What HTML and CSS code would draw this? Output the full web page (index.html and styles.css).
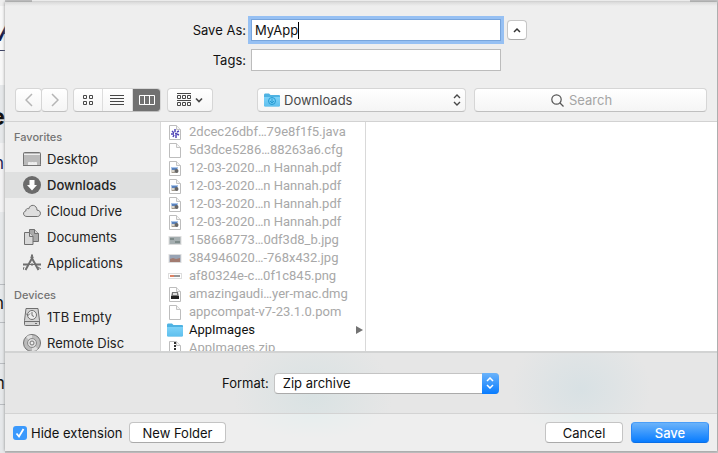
FILE: index.html
```html
<!DOCTYPE html>
<html lang="en">
<head>
<meta charset="utf-8">
<meta name="viewport" content="width=device-width, initial-scale=1">
<title>Save As</title>
<link rel="stylesheet" href="styles.css">
</head>
<body>
<svg width="0" height="0" class="defs" aria-hidden="true">
  <defs>
    <linearGradient id="folderFill" x1="0" y1="0" x2="0" y2="1"><stop offset="0" stop-color="#7dd2f8"/><stop offset="1" stop-color="#5fc0ee"/></linearGradient>
    <symbol id="page" viewBox="0 0 16 16"><path d="M2.5 1.5h7l4 4v10h-11z" fill="#fff" stroke="#bdbdbd"/><path d="M9.5 1.5v4h4" fill="#f4f4f4" stroke="#c4c4c4"/></symbol>
    <symbol id="pdf" viewBox="0 0 16 16"><use href="#page"/><path d="M4 7h7v3H4z" fill="#a9c4e8"/><path d="M4 10l3-2 4 1v4H4z" fill="#d8d4cc"/><path d="M5 8h5v2H5z" fill="#5b83bd"/><circle cx="9.500" cy="11" r="2" fill="#666"/><path d="M5 12h3v1H5z" fill="#a39a8d"/></symbol>
    <symbol id="folder" viewBox="0 0 16 14"><path d="M0 2q0-1.500 1-1.500h4l1.500 1.500H15q1 0 1 1v9.500q0 1-1 1H1q-1 0-1-1z" fill="#4eb2e2"/><path d="M0 4h16v8.500q0 .7-1 .7H1q-1 0-1-.7z" fill="url(#folderFill)"/></symbol>
  </defs>
</svg>
<div class="backdrop" aria-hidden="true">
  <span class="peek peek-title">A</span>
  <span class="peek peek-heading">e</span>
  <span class="peek peek-a">n</span>
  <span class="peek peek-b">n</span>
  <span class="peek peek-c">m</span>
</div>
<main class="dialog">
  <form>
    <section class="fields">
      <label for="name">Save As:</label>
      <div class="name-box"><input id="name" class="text name" type="text" value="MyApp"><span class="caret"></span></div>
      <button class="collapse" type="button" aria-label="Collapse"><svg width="8" height="6" viewBox="0 0 8 6"><path d="M1 5l3-3 3 3" fill="none" stroke="#333" stroke-width="1.500"/></svg></button>
      <label for="tags">Tags:</label>
      <input id="tags" class="text" type="text">
    </section>

    <section class="toolbar">
      <div class="history">
        <button class="tool" type="button" aria-label="Back"><svg width="8" height="14" viewBox="0 0 8 14"><path d="M7 1L1 7l6 6" fill="none" stroke="#b5b5b5" stroke-width="1.500"/></svg></button>
        <button class="tool" type="button" aria-label="Forward"><svg width="8" height="14" viewBox="0 0 8 14"><path d="M1 1l6 6-6 6" fill="none" stroke="#b5b5b5" stroke-width="1.500"/></svg></button>
      </div>
      <div class="views">
        <button type="button" aria-label="Icons"><svg width="12" height="12" viewBox="0 0 12 12" fill="none" stroke="#484848"><path d="M1.500 1.500h3v3h-3zM7.500 1.500h3v3h-3zM1.500 7.500h3v3h-3zM7.500 7.500h3v3h-3z"/></svg></button>
        <button type="button" aria-label="List"><svg width="14" height="12" viewBox="0 0 14 12"><path d="M0 1.500h14M0 4.500h14M0 7.500h14M0 10.500h14" stroke="#484848"/></svg></button>
        <button class="active" type="button" aria-label="Columns"><svg width="16" height="12" viewBox="0 0 16 12"><path d="M.5 1.500h15v9H.5zM5.500 1.500v9M10.500 1.500v9" fill="none" stroke="#fff"/></svg></button>
      </div>
      <button class="tool arrange" type="button" aria-label="Arrange"><svg width="26" height="14" viewBox="0 0 26 14" fill="none" stroke="#484848"><path d="M0 .5h14M0 7.500h14M.5 2.500h3v3h-3zM5.500 2.500h3v3h-3zM10.500 2.500h3v3h-3zM.5 9.500h3v3h-3zM5.500 9.500h3v3h-3zM10.500 9.500h3v3h-3z"/><path d="M19 5.500l3 3 3-3" stroke-width="1.700"/></svg></button>
      <div class="location">
        <svg class="location-icon" width="16" height="14"><use href="#folder"/><circle cx="8" cy="8" r="3.500" fill="none" stroke="#269bd2"/><path d="M8 5.500V10M6 8l2 2 2-2" fill="none" stroke="#269bd2"/></svg>
        <select aria-label="Location"><option>Downloads</option></select>
        <svg class="location-arrows" width="8" height="12" viewBox="0 0 8 12"><path d="M1 4l3-3 3 3M1 8l3 3 3-3" fill="none" stroke="#484848" stroke-width="1.400"/></svg>
      </div>
      <div class="search">
        <svg width="13" height="13" viewBox="0 0 13 13"><circle cx="5.500" cy="5.500" r="4.700" fill="none" stroke="#555" stroke-width="1.200"/><path d="M9 9l3.500 3.500" stroke="#555" stroke-width="1.300"/></svg>
        <input type="search" placeholder="Search" aria-label="Search">
      </div>
    </section>

    <section class="browser">
      <nav class="sidebar">
        <h2>Favorites</h2>
        <a href="#"><svg width="18" height="18" viewBox="0 0 18 18"><rect x=".5" y="2.500" width="17" height="13" rx="1" fill="#bababa" stroke="#737373"/><path d="M1 4.500h16" stroke="#eee"/><path d="M5.500 15v-2.500h2V15M8.500 15v-2.500h2V15M11.500 15v-2.500h2V15" fill="#eee" stroke="#eee"/><path d="M0 15.500h18" stroke="#737373"/></svg>Desktop</a>
        <a href="#" class="current"><svg width="18" height="18" viewBox="0 0 18 18"><circle cx="9" cy="9" r="9" fill="#6b6b6b"/><path d="M6.500 4h5v5H14l-5 5.500L4 9h2.500z" fill="#fff"/></svg>Downloads</a>
        <a href="#"><svg width="18" height="18" viewBox="0 0 18 18"><path d="M4 14.500C-.5 14.500-.3 9.500 2.800 9c-.2-2 1.500-3 3-2.200C7 1.500 14 2.500 14 8.200c4.500-.2 4.500 6.300.3 6.300z" fill="#dedede" stroke="#6f6f6f"/></svg>iCloud Drive</a>
        <a href="#"><svg width="18" height="18" viewBox="0 0 18 18" fill="#d8d8d8" stroke="#6f6f6f"><path d="M6.500 1.500h5l4 4v8h-9z" fill="#aaa"/><path d="M11.500 1.500v4h4"/><path d="M1.500 4.500h5l3.500 4v8H1.500z"/><path d="M6.500 4.500v4H10"/></svg>Documents</a>
        <a href="#"><svg width="18" height="18" viewBox="0 0 18 18" fill="none" stroke="#6f6f6f"><path d="M8 2.500l7.500 13.500M10 2.500L2.500 16" stroke-width="2"/><path d="M8 1.500h2M0 10.500h5M8 10.500h2M13 10.500h5" stroke-width="2"/><path d="M5 10.500h8M1 13l-1 3M15 13l3 2"/></svg>Applications</a>
        <h2 class="later">Devices</h2>
        <a href="#"><svg width="18" height="18" viewBox="0 0 18 18" fill="none" stroke="#6f6f6f"><path d="M3 .5h12l1.500 12v4q0 1-1 1h-13q-1 0-1-1v-4z" fill="#d4d4d4"/><path d="M1.500 13.500h15M12 15.500h2"/><circle cx="9" cy="7" r="4.500" fill="#eee"/><path d="M9 4v3.500l2 1M3 5.500l2 2 2-2"/></svg>1TB Empty</a>
        <a href="#"><svg width="18" height="18" viewBox="0 0 18 18"><circle cx="9" cy="9" r="8.500" fill="#bcbcbc" stroke="#707070"/><path d="M9 9L3 3a8 8 0 0 1 6-2zM9 9l6 6a8 8 0 0 1-6 2z" fill="#e0e0e0"/><circle cx="9" cy="9" r="4.500" fill="#ddd" stroke="#888"/><circle cx="9" cy="9" r="2" fill="#eee" stroke="#777"/></svg>Remote Disc</a>
      </nav>
      <ul class="files">
        <li><svg width="16" height="16"><use href="#page"/><path d="M8 5v3M5 7l2 2M4 10h3M6 13l1-2M9 10.500V14M10 8l2-1M10 10l2 1M8 9.500h2" stroke="#5146b8" stroke-width="1.500"/></svg><span>2dcec26dbf…79e8f1f5.java</span></li>
        <li><svg width="16" height="16"><use href="#page"/></svg><span>5d3dce5286…88263a6.cfg</span></li>
        <li><svg width="16" height="16"><use href="#pdf"/></svg><span>12-03-2020…n Hannah.pdf</span></li>
        <li><svg width="16" height="16"><use href="#pdf"/></svg><span>12-03-2020…n Hannah.pdf</span></li>
        <li><svg width="16" height="16"><use href="#pdf"/></svg><span>12-03-2020…n Hannah.pdf</span></li>
        <li><svg width="16" height="16"><use href="#pdf"/></svg><span>12-03-2020…n Hannah.pdf</span></li>
        <li><svg width="16" height="16"><rect x="2" y="4.500" width="12" height="8" fill="#a5aeb0" stroke="#ddd"/><path d="M3 6h4v2H3zM8 9h5v2H8z" fill="#7e8b8a"/></svg><span>158668773…0df3d8_b.jpg</span></li>
        <li><svg width="16" height="16"><rect x="2" y="4.500" width="12" height="8" fill="#98a3b4" stroke="#ddd"/><path d="M3 9l3-1 3 1 4-1v4H3z" fill="#a27b70"/></svg><span>384946020…-768x432.jpg</span></li>
        <li><svg width="16" height="16"><rect x="1.500" y="5.500" width="13" height="5" fill="#fff" stroke="#ddd"/><path d="M3 8h4" stroke="#df8264" stroke-width="2"/><path d="M7 8h6" stroke="#969696" stroke-width="2"/></svg><span>af80324e-c…0f1c845.png</span></li>
        <li><svg width="16" height="16"><use href="#page"/><path d="M5 6h6l1 5H4z" fill="#777"/><path d="M4 10h8v3H4z" fill="#222"/><path d="M6 7h4v2H6z" fill="#ddd"/></svg><span>amazingaudi…yer-mac.dmg</span></li>
        <li><svg width="16" height="16"><use href="#page"/></svg><span>appcompat-v7-23.1.0.pom</span></li>
        <li class="folder"><svg width="16" height="14"><use href="#folder"/></svg><span>AppImages</span><i class="more"></i></li>
        <li><svg width="16" height="16"><use href="#page"/><path d="M8 2v13" stroke="#333" stroke-width="2" stroke-dasharray="2 1"/></svg><span>AppImages.zip</span></li>
      </ul>
    </section>

    <section class="format">
      <label for="format">Format:</label>
      <div class="popup">
        <select id="format"><option>Zip archive</option></select>
        <span class="popup-cap"><svg width="8" height="12" viewBox="0 0 8 12"><path d="M1 4l3-3 3 3M1 8l3 3 3-3" fill="none" stroke="#fff" stroke-width="1.500"/></svg></span>
      </div>
    </section>

    <footer class="actions">
      <label class="check"><input type="checkbox" checked>Hide extension</label>
      <button class="push new-folder" type="button">New Folder</button>
      <button class="push cancel" type="button">Cancel</button>
      <button class="push save" type="submit">Save</button>
    </footer>
  </form>
</main>
</body>
</html>
```
FILE: styles.css
```css
* { box-sizing: border-box; }

body {
  margin: 0;
  padding: 2px 1px 2px 5px;
  min-height: 100vh;
  overflow: hidden;
  background: #d2d2d2;
  color: #111;
  font: 13px/18px Inter, "Liberation Sans", sans-serif;
}

button, input, select {
  margin: 0;
  color: inherit;
  font: inherit;
}

svg { display: block; flex: none; }
.defs { position: absolute; }

/* Slice of the page behind the sheet */
.backdrop {
  position: absolute;
  inset: 0;
  overflow: hidden;
  background:
    linear-gradient(#3c4264, #3c4264) 0 50px / 5px 1px no-repeat,
    linear-gradient(#b9bcc0, #b9bcc0) 0 284px / 5px 1px no-repeat,
    linear-gradient(#b9bcc0, #b9bcc0) 0 322px / 5px 1px no-repeat,
    linear-gradient(#b9bcc0, #b9bcc0) 0 363px / 5px 1px no-repeat,
    linear-gradient(#b9bcc0, #b9bcc0) 0 404px / 5px 1px no-repeat,
    linear-gradient(#eee 6px, #f8f8f8 6px, #f8f8f8 85px, #e6e8ea 85px, #e6e8ea 143px, #f2f2f3 143px, #f2f2f3 212px, #e6e8ea 212px) 0 0 / 5px 100% no-repeat,
    linear-gradient(#fff, #fff) 32px 0 / calc(100% - 60px) 2px no-repeat,
    #c4c5c6;
}
.peek { position: absolute; right: calc(100% - 5px); color: #111; font-size: 17px; line-height: 20px; }
.peek-title { top: 14px; right: auto; left: -2px; color: #151c4c; font-size: 32px; font-style: italic; line-height: 32px; }
.peek-heading { top: 105px; font-size: 24px; font-weight: 700; line-height: 24px; }
.peek-a { top: 153px; right: calc(100% - 4px); color: #1b2052; }
.peek-b { top: 293px; right: calc(100% - 4px); }
.peek-c { top: 373px; }

.dialog {
  position: relative;
  background: #eee;
  box-shadow: 0 0 3px #888;
}
.dialog form {
  background: linear-gradient(#dadada, #eee 4px);
}

/* Name and tags */
.fields {
  display: grid;
  grid-template-columns: 241px minmax(0, 250px) 21px;
  column-gap: 5px;
  row-gap: 8px;
  align-items: center;
  padding: 17px 0;
}
.fields label { text-align: right; }
.name-box { position: relative; }
.text {
  display: block;
  width: 100%;
  height: 22px;
  padding: 0 3px;
  border: 1px solid #bcbcbc;
  border-radius: 0;
  background: #fff;
  outline: 0;
}
.name { border-color: #78a5dc; box-shadow: 0 0 0 3px #96c0f3; }
.caret { position: absolute; top: 3px; left: 47px; width: 1px; height: 17px; background: #000; }
.collapse {
  display: grid;
  place-items: center;
  justify-self: end;
  width: 20px;
  height: 20px;
  padding: 0;
  border: 1px solid #c6c6c6;
  border-bottom-color: #aaa;
  border-radius: 4px;
  background: #fff;
}

/* Toolbar */
.toolbar {
  display: flex;
  padding: 0 10px 9px;
}
.tool, .views, .location select, .search {
  height: 24px;
  border: 1px solid #d6d6d6;
  border-bottom-color: #bfbfbf;
  border-radius: 4px;
  background: linear-gradient(#fff, #f5f5f5);
}
.tool { display: grid; flex: none; place-items: center; width: 27px; padding: 0; }
.history { display: flex; flex: none; margin-right: 5px; }
.history .tool + .tool { margin-left: -1px; }
.views { display: flex; flex: none; width: 88px; margin-right: 6px; overflow: hidden; }
.views button {
  display: grid;
  flex: 1;
  place-items: center;
  padding: 0;
  border: 0;
  border-right: 1px solid #ddd;
  background: none;
}
.views .active { margin: -1px -1px -1px 0; border: 0; background: #717171; }
.arrange { width: 46px; margin-right: 44px; }
.location { position: relative; flex: 1 1 209px; min-width: 0; margin-right: 8px; color: #484848; }
.location select {
  display: block;
  width: 100%;
  padding: 0 24px 0 26px;
  appearance: none;
}
.location-icon, .location-arrows { position: absolute; top: 5px; pointer-events: none; }
.location-icon { left: 7px; }
.location-arrows { top: 6px; right: 5px; }
.search { display: flex; flex: 1 1 233px; align-items: center; gap: 5px; min-width: 0; padding-left: 76px; }
.search input {
  flex: 1;
  min-width: 0;
  padding: 0;
  border: 0;
  background: none;
  outline: 0;
  appearance: none;
}
.search input::placeholder { color: #a5a5a5; opacity: 1; }

/* Column browser */
.browser {
  display: grid;
  grid-template-columns: 156px 205px 1fr;
  height: 232px;
  overflow: hidden;
  border-top: 1px solid #d2d2d2;
  border-bottom: 2px solid #d2d3d3;
  background: #fff;
}
.sidebar {
  padding-top: 6px;
  overflow: hidden;
  border-right: 1px solid #d9d9d9;
  background: #eee;
}
.sidebar h2 {
  margin: 0;
  padding-left: 9px;
  color: #737373;
  font-size: 11px;
  font-weight: 500;
  line-height: 18px;
}
.sidebar .later { margin-top: 10px; }
.sidebar a {
  display: flex;
  align-items: center;
  gap: 6px;
  height: 26px;
  padding-left: 18px;
  color: #222;
  text-decoration: none;
}
.sidebar .current { background: #dfe0e0; font-weight: 500; }
.files {
  margin: 0;
  padding: 1px 0 0;
  overflow: hidden;
  border-right: 1px solid #d9d9d9;
  color: #a8a8a8;
  font-family: Roboto, "Liberation Sans", sans-serif;
  list-style: none;
}
.files li {
  display: flex;
  align-items: center;
  gap: 6px;
  height: 18px;
  padding: 0 2px 0 6px;
  white-space: nowrap;
}
.files .folder { color: #111; }
.more {
  margin-left: auto;
  border: solid transparent;
  border-width: 4px 0 4px 7px;
  border-left-color: #737373;
}

/* Format */
.format {
  display: flex;
  align-items: center;
  gap: 5px;
  height: 61px;
  padding-left: 217px;
  border-bottom: 1px solid #d3d3d3;
  background:
    radial-gradient(ellipse 80px 64px at 308px 42px, #d9e2e3, transparent),
    radial-gradient(ellipse 70px 60px at 576px 36px, #d8e1e4, transparent),
    #e6e6e6;
}
.popup { position: relative; width: 225px; }
.popup select {
  display: block;
  width: 100%;
  height: 21px;
  padding: 0 24px 0 8px;
  border: 1px solid #c4c4c4;
  border-bottom-color: #aaa;
  border-radius: 4px;
  background: #fff;
  appearance: none;
}
.popup-cap {
  position: absolute;
  inset: 0 0 0 auto;
  display: grid;
  place-items: center;
  width: 17px;
  border-radius: 0 4px 4px 0;
  background: linear-gradient(#6bb3fa, #087cff);
  pointer-events: none;
}

/* Actions */
.actions {
  display: flex;
  align-items: center;
  height: 37px;
  padding: 0 8px;
  background:
    radial-gradient(ellipse 70px 24px at 308px 0, #e7eeee, transparent),
    radial-gradient(ellipse 60px 18px at 576px 0, #e7eeee, transparent),
    #eee;
}
.check { display: flex; align-items: center; gap: 4px; width: 116px; white-space: nowrap; }
.check input {
  width: 14px;
  height: 14px;
  appearance: none;
  border-radius: 3px;
  background: #3b99fc url("data:image/svg+xml,%3Csvg xmlns='http://www.w3.org/2000/svg' viewBox='0 0 14 14'%3E%3Cpath d='M3.500 7.500l2.500 3 4.500-7.500' fill='none' stroke='white' stroke-width='1.800'/%3E%3C/svg%3E");
}
.push {
  height: 21px;
  padding: 0;
  border: 1px solid #c4c4c4;
  border-bottom-color: #aaa;
  border-radius: 4px;
  background: #fff;
  line-height: 18px;
}
.new-folder { width: 97px; }
.cancel { width: 78px; margin-left: auto; }
.save {
  width: 78px;
  margin-left: 8px;
  border-color: #4a9ef8 #2b87f5 #0a6fe6;
  background: linear-gradient(#6bb3fa, #087cff);
  color: #fff;
  font-weight: 500;
}
```
